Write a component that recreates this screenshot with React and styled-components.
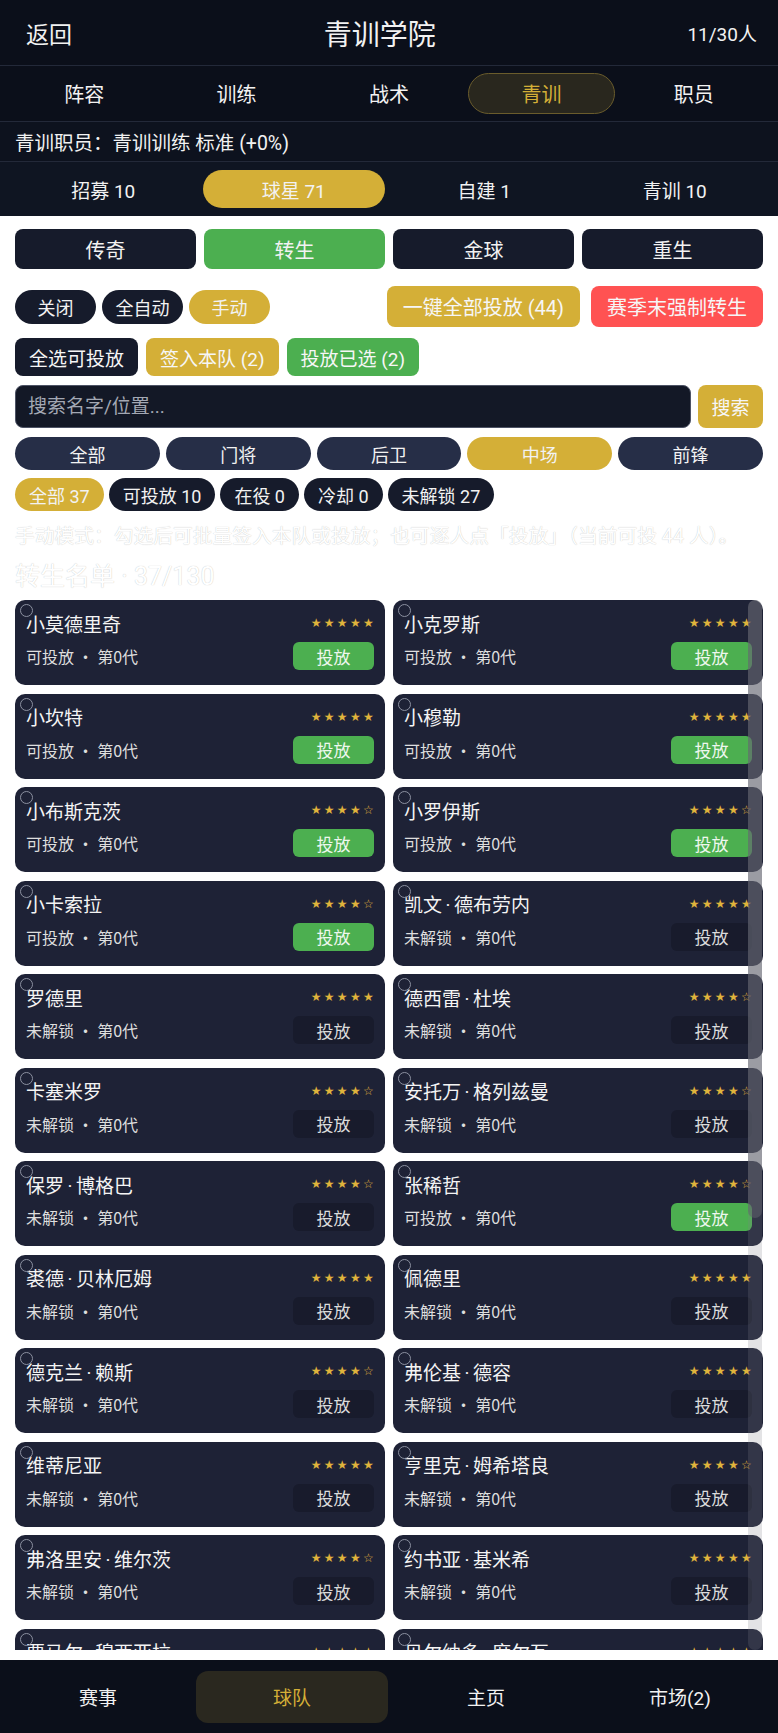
import React from 'react';
import styled, { createGlobalStyle } from 'styled-components';

const GOLD = '#d4af37';
const GREEN = '#4caf50';
const RED = '#ff5252';
const NAVY = '#161b2b';

const GlobalStyle = createGlobalStyle`
    * {
        box-sizing: border-box;
    }
    html,
    body {
        margin: 0;
        padding: 0;
        background: #ffffff;
        font-family: Roboto, 'Noto Sans CJK SC', sans-serif;
    }
`;

const tabs = ['阵容', '训练', '战术', '青训', '职员'];
const subTabs = ['招募 10', '球星 71', '自建 1', '青训 10'];
const categories = ['传奇', '转生', '金球', '重生'];
const positions = ['全部', '门将', '后卫', '中场', '前锋'];
const statuses = ['全部 37', '可投放 10', '在役 0', '冷却 0', '未解锁 27'];
const navItems = ['赛事', '球队', '主页', '市场(2)'];

// [name, stars, open]
const players = [
    ['小莫德里奇', 5, true],
    ['小克罗斯', 5, true],
    ['小坎特', 5, true],
    ['小穆勒', 5, true],
    ['小布斯克茨', 4, true],
    ['小罗伊斯', 4, true],
    ['小卡索拉', 4, true],
    ['凯文·德布劳内', 5, false],
    ['罗德里', 5, false],
    ['德西雷·杜埃', 4, false],
    ['卡塞米罗', 4, false],
    ['安托万·格列兹曼', 4, false],
    ['保罗·博格巴', 4, false],
    ['张稀哲', 4, true],
    ['裘德·贝林厄姆', 5, false],
    ['佩德里', 5, false],
    ['德克兰·赖斯', 4, false],
    ['弗伦基·德容', 5, false],
    ['维蒂尼亚', 5, false],
    ['亨里克·姆希塔良', 4, false],
    ['弗洛里安·维尔茨', 4, false],
    ['约书亚·基米希', 5, false],
    ['贾马尔·穆西亚拉', 5, false],
    ['贝尔纳多·席尔瓦', 5, false],
];

function PlayerName({ name }) {
    const parts = name.split('·');
    return (
        <Name>
            {parts.map((part, i) => (
                <React.Fragment key={i}>
                    {i > 0 && <NameDot>·</NameDot>}
                    {part}
                </React.Fragment>
            ))}
        </Name>
    );
}

function PlayerCard({ name, stars, open }) {
    return (
        <Card>
            <Check />
            <CardTop>
                <PlayerName name={name} />
                <Stars>{'★'.repeat(stars) + '☆'.repeat(5 - stars)}</Stars>
            </CardTop>
            <CardBottom>
                <Meta>{open ? '可投放' : '未解锁'} · 第0代</Meta>
                <ReleaseBtn $open={open}>投放</ReleaseBtn>
            </CardBottom>
        </Card>
    );
}

export default function App() {
    return (
        <Page>
            <GlobalStyle />
            <Header>
                <Back>返回</Back>
                <Title>青训学院</Title>
                <Count>11/30人</Count>
            </Header>
            <TabBar>
                {tabs.map((t) => (
                    <Tab key={t} $active={t === '青训'}>
                        {t}
                    </Tab>
                ))}
            </TabBar>
            <InfoRow>青训职员：青训训练 标准 (+0%)</InfoRow>
            <SubTabBar>
                {subTabs.map((t) => (
                    <SubTab key={t} $active={t === '球星 71'}>
                        {t}
                    </SubTab>
                ))}
            </SubTabBar>

            <Content>
                <CategoryGrid>
                    {categories.map((c) => (
                        <CategoryBtn key={c} $active={c === '转生'}>
                            {c}
                        </CategoryBtn>
                    ))}
                </CategoryGrid>

                <ModeRow>
                    <PillGroup>
                        <ModePill>关闭</ModePill>
                        <ModePill>全自动</ModePill>
                        <ModePill $bg={GOLD}>手动</ModePill>
                    </PillGroup>
                    <BigGroup>
                        <BigBtn $bg={GOLD}>一键全部投放 (44)</BigBtn>
                        <BigBtn $bg={RED}>赛季末强制转生</BigBtn>
                    </BigGroup>
                </ModeRow>

                <BatchRow>
                    <ActionBtn>全选可投放</ActionBtn>
                    <ActionBtn $bg={GOLD}>签入本队 (2)</ActionBtn>
                    <ActionBtn $bg={GREEN}>投放已选 (2)</ActionBtn>
                </BatchRow>

                <SearchRow>
                    <SearchInput placeholder="搜索名字/位置..." />
                    <SearchBtn>搜索</SearchBtn>
                </SearchRow>

                <PositionRow>
                    {positions.map((p) => (
                        <PositionPill key={p} $active={p === '中场'}>
                            {p}
                        </PositionPill>
                    ))}
                </PositionRow>

                <StatusRow>
                    {statuses.map((s) => (
                        <StatusPill key={s} $active={s === '全部 37'}>
                            {s}
                        </StatusPill>
                    ))}
                </StatusRow>

                <Hint>手动模式：勾选后可批量签入本队或投放；也可逐人点「投放」（当前可投 44 人）。</Hint>
                <ListTitle>转生名单 · 37/130</ListTitle>

                <ListWrap>
                    <CardGrid>
                        {players.map(([name, stars, open]) => (
                            <PlayerCard key={name} name={name} stars={stars} open={open} />
                        ))}
                    </CardGrid>
                    <ScrollTrack>
                        <ScrollThumb />
                    </ScrollTrack>
                </ListWrap>
            </Content>

            <BottomNav>
                {navItems.map((n) => (
                    <NavItem key={n} $active={n === '球队'}>
                        {n}
                    </NavItem>
                ))}
            </BottomNav>
        </Page>
    );
}

const Page = styled.div`
    display: flex;
    flex-direction: column;
    height: 100vh;
    overflow: hidden;
    color: #f2f2f2;
`;

const Header = styled.header`
    display: flex;
    align-items: center;
    justify-content: space-between;
    height: 66px;
    padding: 0 21px 0 26px;
    background: #0b0f1a;
    border-bottom: 1px solid #232939;
`;

const Back = styled.div`
    font-size: 23px;
`;

const Title = styled.div`
    font-size: 28px;
`;

const Count = styled.div`
    font-size: 19px;
`;

const TabBar = styled.nav`
    display: grid;
    grid-template-columns: repeat(5, 1fr);
    align-items: center;
    height: 56px;
    padding: 0 8px;
    background: #0b0f1a;
    border-bottom: 1px solid #232939;
`;

const Tab = styled.div`
    display: flex;
    align-items: center;
    justify-content: center;
    height: 41px;
    margin: 0 3px;
    border-radius: 21px;
    font-size: 20px;
    color: ${(p) => (p.$active ? GOLD : '#f2f2f2')};
    background: ${(p) => (p.$active ? '#29271e' : 'transparent')};
    border: 1px solid ${(p) => (p.$active ? '#6a5c2c' : 'transparent')};
`;

const InfoRow = styled.div`
    display: flex;
    align-items: center;
    height: 40px;
    padding: 0 15px;
    font-size: 19.5px;
    background: #0d121e;
    border-bottom: 1px solid #232939;
`;

const SubTabBar = styled.nav`
    display: grid;
    grid-template-columns: repeat(4, 1fr);
    align-items: center;
    height: 54px;
    padding: 0 8px;
    background: #0f1522;
`;

const SubTab = styled.div`
    display: flex;
    align-items: center;
    justify-content: center;
    height: 38px;
    margin: 0 4px;
    border-radius: 19px;
    font-size: 19px;
    background: ${(p) => (p.$active ? GOLD : 'transparent')};
`;

const Content = styled.main`
    flex: 1;
    min-height: 0;
    display: flex;
    flex-direction: column;
    padding: 13px 15px 10px;
    background: #ffffff;
`;

const CategoryGrid = styled.div`
    display: grid;
    grid-template-columns: repeat(4, 1fr);
    gap: 8px;
`;

const CategoryBtn = styled.button`
    height: 40px;
    border: 0;
    border-radius: 8px;
    font: inherit;
    font-size: 20px;
    color: #f2f2f2;
    background: ${(p) => (p.$active ? GREEN : NAVY)};
`;

const ModeRow = styled.div`
    display: flex;
    align-items: center;
    justify-content: space-between;
    margin-top: 17px;
`;

const PillGroup = styled.div`
    display: flex;
    align-items: center;
    gap: 6px;
`;

const BigGroup = styled.div`
    display: flex;
    align-items: center;
    gap: 11px;
`;

const ModePill = styled.div`
    display: flex;
    align-items: center;
    justify-content: center;
    min-width: 81px;
    height: 34px;
    padding: 0 12px;
    border-radius: 17px;
    font-size: 18px;
    background: ${(p) => p.$bg || NAVY};
`;

const BigBtn = styled.button`
    height: 41px;
    padding: 0 16px;
    border: 0;
    border-radius: 8px;
    font: inherit;
    font-size: 20px;
    color: #f6f6f6;
    background: ${(p) => p.$bg};
    white-space: nowrap;
`;

const BatchRow = styled.div`
    display: flex;
    gap: 8px;
    margin-top: 11px;
`;

const ActionBtn = styled.button`
    height: 38px;
    padding: 0 14px;
    border: 0;
    border-radius: 8px;
    font: inherit;
    font-size: 19px;
    color: #f6f6f6;
    background: ${(p) => p.$bg || NAVY};
    white-space: nowrap;
`;

const SearchRow = styled.div`
    display: flex;
    gap: 7px;
    margin-top: 9px;
`;

const SearchInput = styled.input`
    flex: 1;
    height: 43px;
    padding: 0 12px;
    border: 1.5px solid #4d5365;
    border-radius: 8px;
    outline: none;
    font: inherit;
    font-size: 19px;
    color: #f2f2f2;
    background: #131826;

    &::placeholder {
        color: #a3a8b4;
    }
`;

const SearchBtn = styled.button`
    width: 65px;
    height: 43px;
    border: 0;
    border-radius: 8px;
    font: inherit;
    font-size: 19px;
    color: #f6f6f6;
    background: ${GOLD};
`;

const PositionRow = styled.div`
    display: grid;
    grid-template-columns: repeat(5, 1fr);
    gap: 6px;
    margin-top: 9px;
`;

const PositionPill = styled.div`
    display: flex;
    align-items: center;
    justify-content: center;
    height: 33px;
    border-radius: 17px;
    font-size: 18px;
    background: ${(p) => (p.$active ? GOLD : '#262e47')};
`;

const StatusRow = styled.div`
    display: flex;
    gap: 5px;
    margin-top: 8px;
`;

const StatusPill = styled.div`
    display: flex;
    align-items: center;
    height: 33px;
    padding: 0 14px;
    border-radius: 17px;
    font-size: 18px;
    background: ${(p) => (p.$active ? GOLD : NAVY)};
`;

const Hint = styled.p`
    margin: 13px 0 0;
    line-height: 26px;
    font-size: 19.75px;
    color: #ffffff;
    text-shadow: 0 0 1px rgba(0, 0, 0, 0.28);
    white-space: nowrap;
`;

const ListTitle = styled.h2`
    margin: 12px 0 0;
    line-height: 30px;
    font-size: 25px;
    font-weight: 400;
    color: #ffffff;
    text-shadow: 0 0 1px rgba(0, 0, 0, 0.28);
`;

const ListWrap = styled.div`
    position: relative;
    flex: 1;
    min-height: 0;
    margin-top: 8px;
    overflow: hidden;
`;

const CardGrid = styled.div`
    display: grid;
    grid-template-columns: 1fr 1fr;
    column-gap: 8px;
    row-gap: 8.5px;
`;

const Card = styled.div`
    position: relative;
    display: flex;
    flex-direction: column;
    gap: 6px;
    height: 85px;
    padding: 10px 11px 0;
    border-radius: 10px;
    background: #1e2236;
`;

const Check = styled.span`
    position: absolute;
    top: 4px;
    left: 5px;
    width: 13px;
    height: 13px;
    border: 1.5px solid #8b90a0;
    border-radius: 50%;
`;

const CardTop = styled.div`
    display: flex;
    align-items: center;
    justify-content: space-between;
    height: 26px;
`;

const Name = styled.div`
    font-size: 19px;
    color: #f4f4f4;
    white-space: nowrap;
`;

const NameDot = styled.span`
    margin: 0 3.5px;
`;

const Stars = styled.div`
    margin-right: -2px;
    font-family: 'DejaVu Sans', sans-serif;
    font-size: 12px;
    letter-spacing: 2.3px;
    color: #e0b43c;
`;

const CardBottom = styled.div`
    display: flex;
    align-items: center;
    justify-content: space-between;
`;

const Meta = styled.div`
    font-family: 'Noto Sans CJK SC', sans-serif;
    font-size: 16px;
    color: #dedede;
`;

const ReleaseBtn = styled.button`
    width: 81px;
    height: 28px;
    border: 0;
    border-radius: 6px;
    font: inherit;
    font-size: 17px;
    color: ${(p) => (p.$open ? '#eef7ee' : '#dcdcdc')};
    background: ${(p) => (p.$open ? GREEN : '#181b2c')};
`;

const ScrollTrack = styled.div`
    position: absolute;
    top: 0;
    right: 1px;
    bottom: 0;
    width: 14px;
    border-radius: 7px;
    background: rgba(128, 128, 136, 0.22);
`;

const ScrollThumb = styled.div`
    height: 618px;
    border-radius: 7px;
    background: rgba(96, 98, 110, 0.55);
`;

const BottomNav = styled.nav`
    display: grid;
    grid-template-columns: repeat(4, 1fr);
    align-items: center;
    height: 73px;
    padding: 0 1px;
    background: #0b0f1a;
`;

const NavItem = styled.div`
    display: flex;
    align-items: center;
    justify-content: center;
    height: 52px;
    margin: 0 1px;
    border-radius: 12px;
    font-size: 19px;
    color: ${(p) => (p.$active ? GOLD : '#f2f2f2')};
    background: ${(p) => (p.$active ? '#2a281f' : 'transparent')};
`;
